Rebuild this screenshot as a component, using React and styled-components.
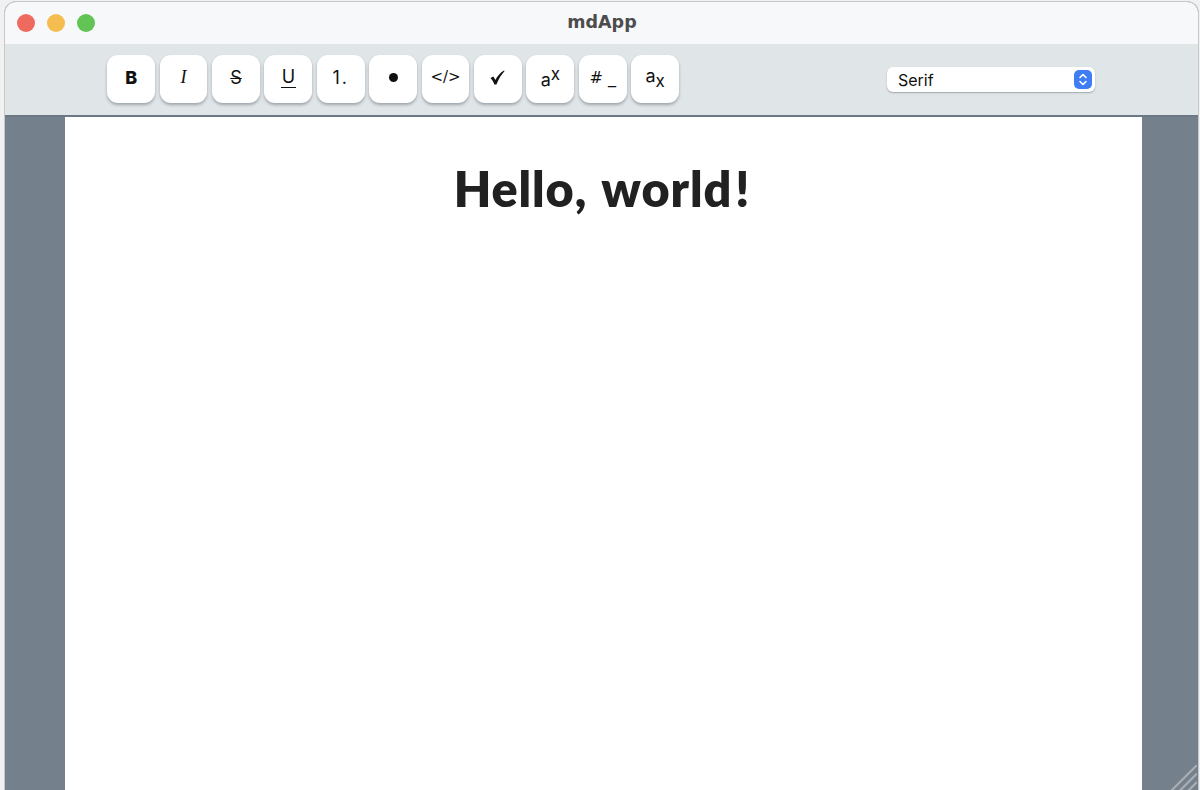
import React from 'react';
import styled, { createGlobalStyle } from 'styled-components';

const GlobalStyle = createGlobalStyle`
  html, body {
    margin: 0;
    padding: 0;
    height: 790px;
    overflow: hidden;
    background: #f1f1f1;
  }
`;

const Desktop = styled.div`
  height: 790px;
  padding: 1px 1px 0 4px;
  box-sizing: border-box;
  overflow: hidden;
`;

const Window = styled.div`
  position: relative;
  display: flex;
  flex-direction: column;
  height: 790px;
  box-sizing: border-box;
  border: 1px solid #c6c8ca;
  border-bottom: 0;
  border-radius: 12px 12px 0 0;
  overflow: hidden;
  background: #75808d;
`;

const TitleBar = styled.div`
  position: relative;
  display: flex;
  align-items: center;
  justify-content: center;
  flex: 0 0 41.5px;
  padding-bottom: 1px;
  box-sizing: border-box;
  background: #f7f8fa;
`;

const Lights = styled.div`
  position: absolute;
  left: 12px;
  top: 11.5px;
  display: flex;
  gap: 12px;
`;

const Light = styled.span`
  width: 18px;
  height: 18px;
  border-radius: 50%;
  background: ${p => p.$color};
`;

const Title = styled.div`
  font: 700 17.5px "DejaVu Sans", sans-serif;
  color: #4c4c4c;
  margin-left: 1px;
`;

const Toolbar = styled.div`
  display: flex;
  align-items: center;
  flex: 0 0 73.5px;
  box-sizing: border-box;
  padding: 0 103px 1px 102.3px;
  background: #e0e5e8;
  border-bottom: 2px solid #6d7885;
`;

const ButtonRow = styled.div`
  display: flex;
  gap: 4.6px;
`;

const ToolButton = styled.button`
  display: flex;
  align-items: center;
  justify-content: center;
  width: 47.8px;
  height: 47.5px;
  padding: 0 0 3px;
  border: 0;
  border-radius: 11px;
  background: #fff;
  box-shadow: 0 2px 3px rgba(70, 80, 90, 0.42);
  color: #111;
  letter-spacing: ${p => p.$spacing || 0}px;
  font: ${p => p.$weight || 400} ${p => p.$size || 18}px "Inter", "DejaVu Sans", sans-serif;
`;

const Italic = styled.span`
  font: italic 400 18px "Liberation Serif", serif;
`;

const Struck = styled.span`
  text-decoration: line-through;
  text-decoration-thickness: 1.2px;
`;

const Under = styled.span`
  border-bottom: 1.5px solid #111;
  line-height: 20px;
  padding: 0 1px;
`;

const Code = styled.span`
  font: 400 15px "DejaVu Sans", sans-serif;
`;

const Dot = styled.span`
  width: 9px;
  height: 9px;
  border-radius: 50%;
  background: #111;
`;

const Sup = styled.span`
  font-size: 17px;
  position: relative;
  top: ${p => p.$shift}px;
`;

const Base = styled.span`
  position: relative;
  top: ${p => p.$shift}px;
`;

const Heading2 = styled.span`
  font: 400 16px "DejaVu Sans", sans-serif;
  white-space: pre;
`;

const SelectBox = styled.div`
  display: flex;
  align-items: center;
  justify-content: space-between;
  margin: 1.5px 0 0 auto;
  width: 208.5px;
  height: 25px;
  box-sizing: border-box;
  padding: 0 3.5px 0 11.5px;
  border-radius: 6px;
  background: #fff;
  box-shadow: 0 1px 1.5px rgba(60, 70, 80, 0.4);
  font: 400 16px "Inter", "Liberation Sans", sans-serif;
  color: #111;
`;

const Stepper = styled.span`
  display: flex;
  align-items: center;
  justify-content: center;
  width: 18px;
  height: 19px;
  border-radius: 5px;
  background: #3f7df5;
`;

const Workspace = styled.div`
  flex: 1;
  display: flex;
  padding: 0 56px 0 60px;
  min-height: 0;
`;

const Page = styled.div`
  flex: 1;
  background: #fff;
  padding-top: 41px;
  text-align: center;
`;

const Heading = styled.h1`
  margin: 0;
  font: 800 48.5px/60px "Lato", sans-serif;
  color: #212121;
  letter-spacing: 0.9px;
  word-spacing: 3px;
  padding-right: 3px;
`;

const Bang = styled.span`
  margin-left: 3px;
`;

const Grip = styled.svg`
  position: absolute;
  right: 1px;
  bottom: 0;
`;

const App = () => (
  <Desktop>
    <GlobalStyle />
    <Window>
      <TitleBar>
        <Lights>
          <Light $color="#ef6a5e" />
          <Light $color="#f5bd4f" />
          <Light $color="#61c454" />
        </Lights>
        <Title>mdApp</Title>
      </TitleBar>
      <Toolbar>
        <ButtonRow>
          <ToolButton $weight={800}>B</ToolButton>
          <ToolButton><Italic>I</Italic></ToolButton>
          <ToolButton><Struck>S</Struck></ToolButton>
          <ToolButton><Under>U</Under></ToolButton>
          <ToolButton $spacing={2}>1.</ToolButton>
          <ToolButton><Dot /></ToolButton>
          <ToolButton><Code>&lt;/&gt;</Code></ToolButton>
          <ToolButton>
            <svg width="15" height="15" viewBox="0 0 15 15" fill="#111">
              <path d="M0.5 8 L3.4 6.6 L5.4 10 C7.3 6 10.2 2.6 14 0.4 L14.6 1 C11.3 4.6 8.5 9.2 6.4 14.6 L4.4 14.6 C3.6 12 2.2 9.8 0.5 8 Z" />
            </svg>
          </ToolButton>
          <ToolButton><Base $shift={2}>a</Base><Sup $shift={-3}>x</Sup></ToolButton>
          <ToolButton><Heading2># _</Heading2></ToolButton>
          <ToolButton><Base $shift={-2}>a</Base><Sup $shift={4}>x</Sup></ToolButton>
        </ButtonRow>
        <SelectBox>
          Serif
          <Stepper>
            <svg width="10" height="15" viewBox="0 0 10 15" fill="none" stroke="#fff" strokeWidth="1.6" strokeLinecap="round" strokeLinejoin="round">
              <path d="M2 5.5 L5 2.5 L8 5.5" />
              <path d="M2 9.5 L5 12.5 L8 9.5" />
            </svg>
          </Stepper>
        </SelectBox>
      </Toolbar>
      <Workspace>
        <Page>
          <Heading>Hello, world<Bang>!</Bang></Heading>
        </Page>
      </Workspace>
      <Grip width="26" height="26" viewBox="0 0 26 26" stroke="#a9adb2" strokeWidth="2.2">
        <path d="M0 26 L26 0 M8.5 26 L26 8.5 M17 26 L26 17" />
      </Grip>
    </Window>
  </Desktop>
);

export default App;
